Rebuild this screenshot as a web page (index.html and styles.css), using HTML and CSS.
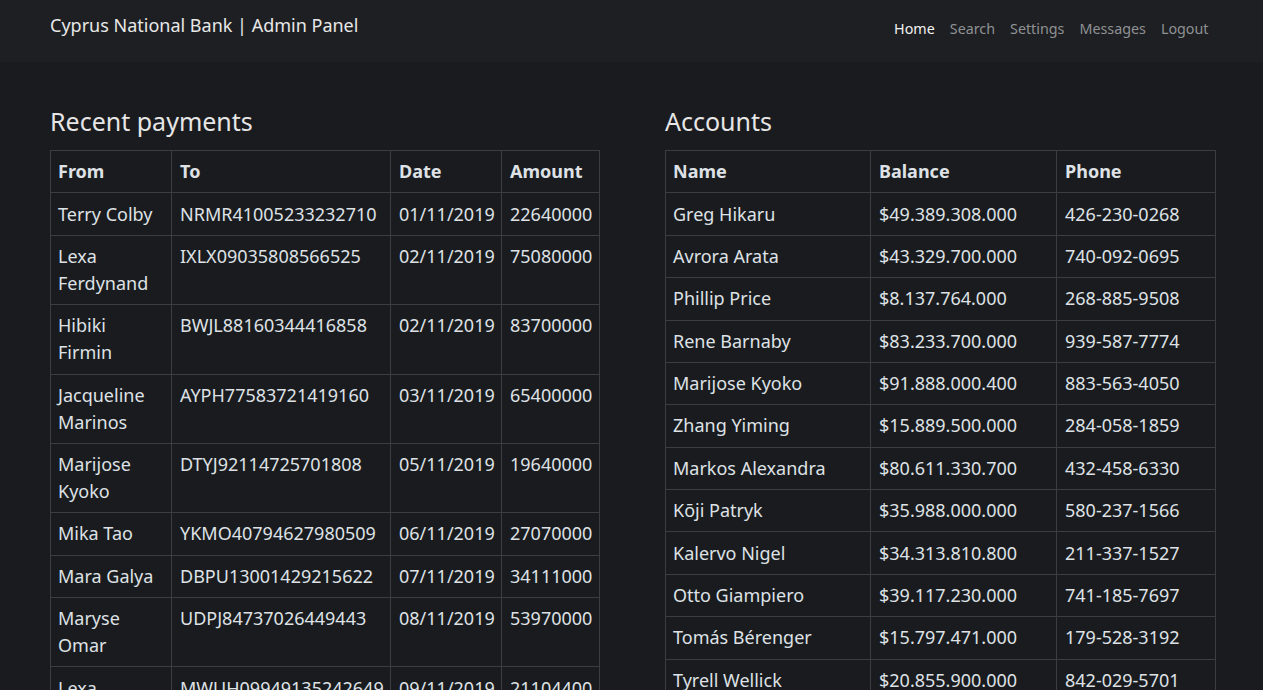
FILE: index.html
```html
<!DOCTYPE html>
<html lang="en">
<head>
<meta charset="utf-8">
<title>Cyprus National Bank | Admin Panel</title>
<link rel="stylesheet" href="styles.css">
</head>
<body>
<header class="navbar">
  <a class="brand" href="#">Cyprus National Bank | Admin Panel</a>
  <nav class="nav">
    <a class="nav-link active" href="#">Home</a>
    <a class="nav-link" href="#">Search</a>
    <a class="nav-link" href="#">Settings</a>
    <a class="nav-link" href="#">Messages</a>
    <a class="nav-link" href="#">Logout</a>
  </nav>
</header>
<main class="content">
  <section class="panel">
    <h3 class="title">Recent payments</h3>
    <table class="table">
      <colgroup>
        <col class="c-from"><col class="c-to"><col class="c-date"><col class="c-amount">
      </colgroup>
      <thead>
        <tr><th>From</th><th>To</th><th>Date</th><th>Amount</th></tr>
      </thead>
      <tbody>
        <tr><td>Terry Colby</td><td>NRMR41005233232710</td><td>01/11/2019</td><td>22640000</td></tr>
        <tr><td>Lexa Ferdynand</td><td>IXLX09035808566525</td><td>02/11/2019</td><td>75080000</td></tr>
        <tr><td>Hibiki Firmin</td><td>BWJL88160344416858</td><td>02/11/2019</td><td>83700000</td></tr>
        <tr><td>Jacqueline Marinos</td><td>AYPH77583721419160</td><td>03/11/2019</td><td>65400000</td></tr>
        <tr><td>Marijose Kyoko</td><td>DTYJ92114725701808</td><td>05/11/2019</td><td>19640000</td></tr>
        <tr><td>Mika Tao</td><td>YKMO40794627980509</td><td>06/11/2019</td><td>27070000</td></tr>
        <tr><td>Mara Galya</td><td>DBPU13001429215622</td><td>07/11/2019</td><td>34111000</td></tr>
        <tr><td>Maryse Omar</td><td>UDPJ84737026449443</td><td>08/11/2019</td><td>53970000</td></tr>
        <tr><td>Lexa Ferdynand</td><td>MWUH09949135242649</td><td>09/11/2019</td><td>21104400</td></tr>
      </tbody>
    </table>
  </section>
  <section class="panel">
    <h3 class="title">Accounts</h3>
    <table class="table">
      <colgroup>
        <col class="c-name"><col class="c-balance"><col class="c-phone">
      </colgroup>
      <thead>
        <tr><th>Name</th><th>Balance</th><th>Phone</th></tr>
      </thead>
      <tbody>
        <tr><td>Greg Hikaru</td><td>$49.389.308.000</td><td>426-230-0268</td></tr>
        <tr><td>Avrora Arata</td><td>$43.329.700.000</td><td>740-092-0695</td></tr>
        <tr><td>Phillip Price</td><td>$8.137.764.000</td><td>268-885-9508</td></tr>
        <tr><td>Rene Barnaby</td><td>$83.233.700.000</td><td>939-587-7774</td></tr>
        <tr><td>Marijose Kyoko</td><td>$91.888.000.400</td><td>883-563-4050</td></tr>
        <tr><td>Zhang Yiming</td><td>$15.889.500.000</td><td>284-058-1859</td></tr>
        <tr><td>Markos Alexandra</td><td>$80.611.330.700</td><td>432-458-6330</td></tr>
        <tr><td>Kōji Patryk</td><td>$35.988.000.000</td><td>580-237-1566</td></tr>
        <tr><td>Kalervo Nigel</td><td>$34.313.810.800</td><td>211-337-1527</td></tr>
        <tr><td>Otto Giampiero</td><td>$39.117.230.000</td><td>741-185-7697</td></tr>
        <tr><td>Tomás Bérenger</td><td>$15.797.471.000</td><td>179-528-3192</td></tr>
        <tr><td>Tyrell Wellick</td><td>$20.855.900.000</td><td>842-029-5701</td></tr>
      </tbody>
    </table>
  </section>
</main>
</body>
</html>
```

FILE: styles.css
```css
* { box-sizing: border-box; }
html, body { margin: 0; padding: 0; }
body {
  background: #1a1b1e;
  color: #dee2e6;
  font-family: "Noto Sans", "Open Sans", sans-serif;
  font-size: 18px;
  line-height: 1.5;
}
a { text-decoration: none; }

.navbar {
  height: 62px;
  background: #1e1f22;
  display: flex;
  justify-content: space-between;
  align-items: flex-start;
  padding: 0 47px 0 50px;
}
.brand {
  color: #e8e8e8;
  font-size: 18px;
  line-height: 27px;
  padding-top: 11.5px;
}
.nav {
  display: flex;
  padding-top: 17.5px;
}
.nav-link {
  color: #8e9194;
  font-size: 14.3px;
  line-height: 21.6px;
  padding: 0 7.5px;
}
.nav-link.active { color: #f2f2f2; }

.content {
  display: grid;
  grid-template-columns: 550px 550px;
  column-gap: 65px;
  padding: 44px 0 0 50px;
}
.title {
  margin: 0 0 14px;
  font-size: 25px;
  font-weight: 400;
  line-height: 30px;
  color: #e6e6e6;
}
.table {
  width: 100%;
  border-collapse: collapse;
  table-layout: fixed;
}
.table th, .table td {
  border: 1px solid #3b3e41;
  padding: 7.2px 8px;
  text-align: left;
  vertical-align: top;
  line-height: 27px;
}
.table th:first-child, .table td:first-child { padding-left: 7px; }
.table th { font-weight: 700; padding-top: 7.2px; padding-bottom: 7.2px; }
.c-from { width: 121px; }
.c-to { width: 219px; }
.c-date { width: 111px; }
.c-amount { width: 98px; }
.c-name { width: 205px; }
.c-balance { width: 186px; }
.c-phone { width: 159px; }
```
